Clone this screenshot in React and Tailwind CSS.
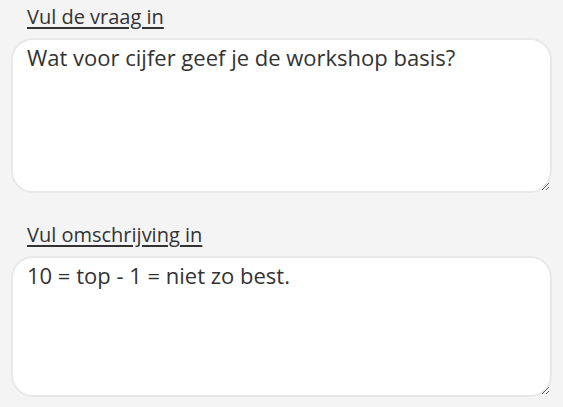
import React, { useState } from 'react';

const Field = ({ label, value, onChange, boxHeight }) => (
  <div className="flex flex-col">
    <label className="pl-[16px] text-[20px] leading-[26px] text-[#333] underline underline-offset-[3px]">
      {label}
    </label>
    <textarea
      value={value}
      onChange={(e) => onChange(e.target.value)}
      className={`mt-[8px] w-full ${boxHeight} bg-white border-2 border-[#e8e8e8] rounded-[22px] px-[14px] pt-[2px] pb-[8px] text-[22px] leading-[30px] text-[#333] outline-none resize-y`}
    />
  </div>
);

const App = () => {
  const [question, setQuestion] = useState('Wat voor cijfer geef je de workshop basis?');
  const [description, setDescription] = useState('10 = top - 1 = niet zo best.');

  return (
    <div
      className="min-h-[407px] bg-[#f4f4f4] px-[11px] pt-[4px] flex flex-col gap-[29px]"
      style={{ fontFamily: '"Open Sans", sans-serif' }}
    >
      <Field label="Vul de vraag in" value={question} onChange={setQuestion} boxHeight="h-[155px]" />
      <Field label="Vul omschrijving in" value={description} onChange={setDescription} boxHeight="h-[141px]" />
    </div>
  );
};

export default App;
